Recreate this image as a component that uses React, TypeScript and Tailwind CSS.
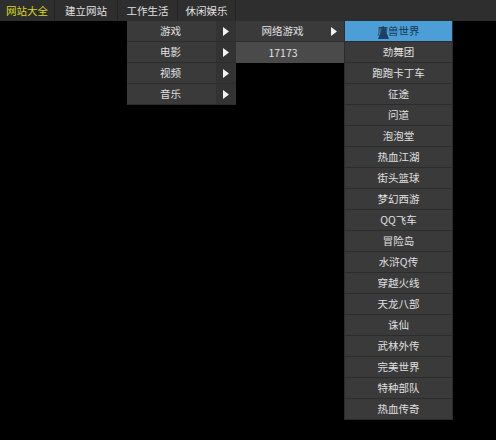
const top = [
  { t: '网站大全', w: 'w-[55px]' },
  { t: '建立网站', w: 'w-[63px]' },
  { t: '工作生活', w: 'w-[60px]' },
  { t: '休闲娱乐', w: 'w-[58px]' },
]
const cats = ['游戏', '电影', '视频', '音乐']
const games = ['魔兽世界', '劲舞团', '跑跑卡丁车', '征途', '问道', '泡泡堂', '热血江湖', '街头篮球', '梦幻西游', 'QQ飞车', '冒险岛', '水浒Q传', '穿越火线', '天龙八部', '诛仙', '武林外传', '完美世界', '特种部队', '热血传奇']

function Arrow() {
  return (
    <svg width="6" height="9" viewBox="0 0 6 9">
      <path d="M0 0 L6 4.5 L0 9 Z" fill="#f2f2f2" />
    </svg>
  )
}

export default function App() {
  return (
    <div className="w-[496px] h-[440px] bg-black text-[10.5px] text-[#e0e0e0] overflow-hidden" style={{ fontFamily: '"Noto Sans CJK SC", "Liberation Sans", sans-serif' }}>
      <div className="flex h-[21px] bg-[#2e2e2e]">
        {top.map((x, i) => (
          <div key={x.t} className={`flex items-center justify-center whitespace-nowrap border-r border-[#242424] ${x.w} ${i === 0 ? 'text-[#d8d820]' : ''}`}>{x.t}</div>
        ))}
      </div>
      <div className="flex">
        <div className="ml-[127px] w-[109px] self-start bg-[#3a3a3a]">
          {cats.map((c) => (
            <div key={c} className="flex h-[21px] border-b border-[#2c2c2c]">
              <div className="flex-1 flex items-center justify-end pr-[35px]">{c}</div>
              <div className="w-[20px] flex items-center justify-center bg-[#333]"><Arrow /></div>
            </div>
          ))}
        </div>
        <div className="w-[108px] self-start">
          <div className="flex h-[21px] bg-[#3a3a3a] border-b border-[#2c2c2c]">
            <div className="flex-1 flex items-center justify-center pl-[5px]">网络游戏</div>
            <div className="w-[20px] flex items-center justify-center"><Arrow /></div>
          </div>
          <div className="flex h-[21px] items-center justify-center bg-[#4a4a4a] pr-[14px]">17173</div>
        </div>
        <div className="w-[109px] bg-[#3a3a3a] border-x border-[#2c2c2c]">
          {games.map((g, i) => (
            <div key={g} className={`relative flex h-[21px] items-center justify-center border-b border-[#2c2c2c] ${i === 0 ? 'bg-[#4b9fd6] text-[#1a3550]' : ''}`}>
              {g}
              {i === 0 && (
                <svg className="absolute left-[33px] top-[5px]" width="11" height="13" viewBox="0 0 11 13">
                  <path d="M5.5 0 L11 13 L0 13 Z" fill="#1d3f66" />
                </svg>
              )}
            </div>
          ))}
        </div>
      </div>
    </div>
  )
}
